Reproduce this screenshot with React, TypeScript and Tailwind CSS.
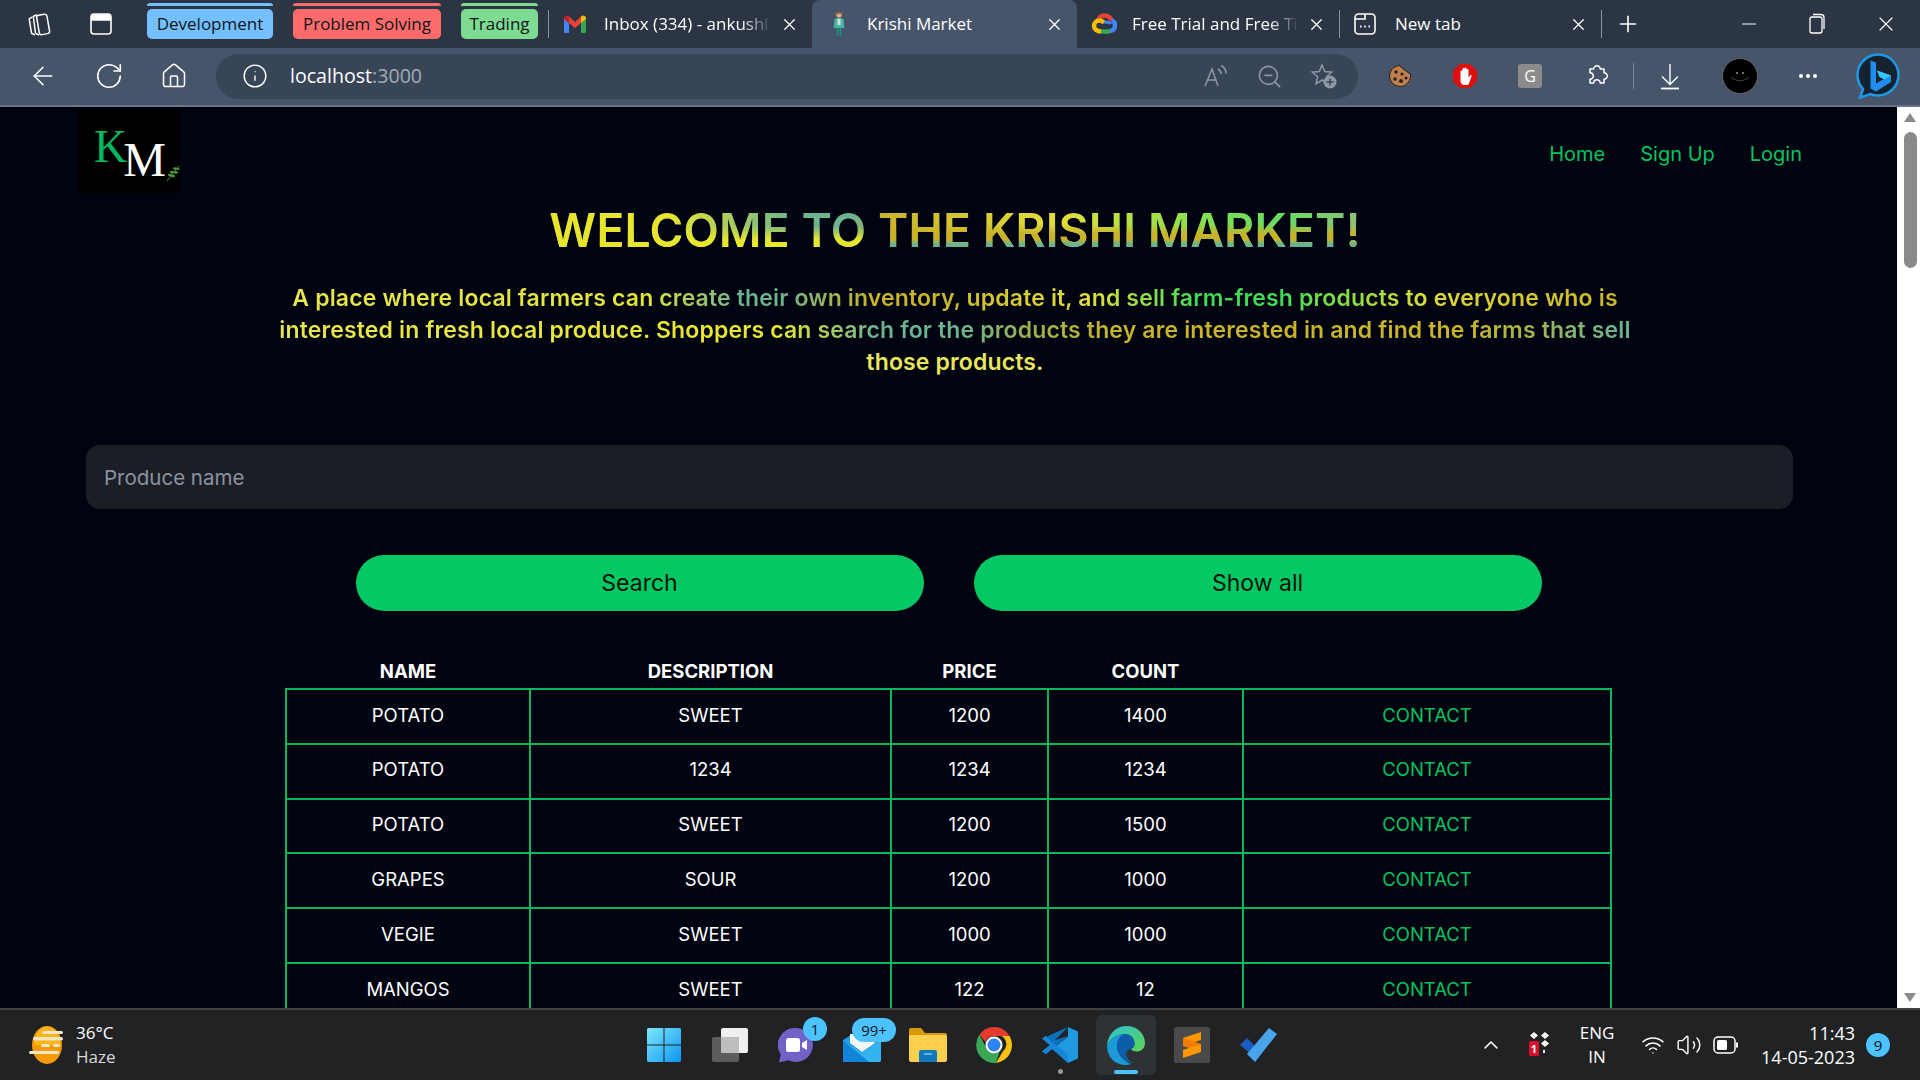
import {
  ArrowLeft,
  ChevronUp,
  Home,
  Info,
  Minus,
  MoreHorizontal,
  Plus,
  RotateCw,
  Volume2,
  Wifi,
  X,
  ZoomOut,
} from "lucide-react"
import type { ReactNode } from "react"

const ROWS = [
  ["POTATO", "SWEET", "1200", "1400"],
  ["POTATO", "1234", "1234", "1234"],
  ["POTATO", "SWEET", "1200", "1500"],
  ["GRAPES", "SOUR", "1200", "1000"],
  ["VEGIE", "SWEET", "1000", "1000"],
  ["MANGOS", "SWEET", "122", "12"],
]

function CollectionsIcon() {
  return (
    <svg width="30" height="30" viewBox="0 0 26 26" fill="none" stroke="#fff" strokeWidth="1.3">
      <rect x="12" y="5" width="9" height="17" rx="2" transform="rotate(-10 16 13)" />
      <path d="M11 5 8 6.5l2 14.5 3 1.5" />
      <path d="M7 7 4.5 8.5l2 12.5 3 1.5" />
    </svg>
  )
}

function VerticalTabsIcon() {
  return (
    <svg width="24" height="24" viewBox="0 0 24 24" fill="none" stroke="#fff" strokeWidth="1.6">
      <rect x="2" y="2" width="20" height="20" rx="3" />
      <path d="M3 3h18v5H3z" fill="#fff" />
    </svg>
  )
}

function GmailIcon() {
  return (
    <svg width="24" height="20" viewBox="0 0 24 20">
      <path d="M1 4v14a1 1 0 0 0 1 1h4V9z" fill="#4285f4" />
      <path d="M23 4v14a1 1 0 0 1-1 1h-4V9z" fill="#34a853" />
      <path d="M18 2.5 12 8 6 2.5V9l6 5 6-5z" fill="#ea4335" />
      <path d="M1 4c0-2.4 3-3.5 5-1.5V9L1 5z" fill="#c5221f" />
      <path d="M23 4c0-2.4-3-3.5-5-1.5V9l5-4z" fill="#fbbc04" />
    </svg>
  )
}

function FarmerIcon() {
  return (
    <svg width="26" height="26" viewBox="-6 0 26 26">
      <circle cx="7" cy="4" r="2.6" fill="#e4a77f" />
      <path d="M3 1.8h8v1.2H3z" fill="#a8612e" />
      <path d="M2.5 8 7 6.6 11.5 8l.8 9H1.7z" fill="#3fb8a6" />
      <path d="M5.5 8h3v6h-3z" fill="#f2d9c4" />
      <path d="M4.6 17h1.8v8H4.6zM7.6 17h1.8v8H7.6z" fill="#1f8f85" />
    </svg>
  )
}

function CloudIcon() {
  return (
    <svg width="26" height="22" viewBox="0 0 26 22" fill="none" strokeWidth="4.5">
      <path d="M7 8c1-3.500 3.500-5.500 6.500-5.500 3.500 0 6 2 7 5" stroke="#ea4335" />
      <path d="M20.500 7.500c3 1 4 3.500 3.500 6-.5 2.500-2.500 4.500-5.500 4.500" stroke="#4285f4" />
      <path d="M19 18.500H10" stroke="#34a853" />
      <path d="M10 18.500c-4 0-7-2.500-7-5.500 0-3 2.500-5.500 5.500-5.500 2 0 3.500 1 4.500 2.500" stroke="#fbbc04" />
      <path d="M13.500 10c2-1.500 5-1 6 1" stroke="#4285f4" strokeWidth="3" />
    </svg>
  )
}

function NewTabIcon() {
  return (
    <svg width="22" height="24" viewBox="0 0 22 24" fill="none" stroke="#fff" strokeWidth="1.6">
      <rect x="1" y="2" width="20" height="20" rx="3.500" />
      <path d="M1 7h10V2" />
      <path d="M6 14.500h1.500M10.250 14.500h1.500M14.500 14.500H16" strokeWidth="2" />
    </svg>
  )
}

function ReadAloudIcon() {
  return (
    <svg width="26" height="26" viewBox="0 0 26 26" fill="none" stroke="#8f98a5" strokeWidth="1.5">
      <path d="M2 23 9 6l6 17M4.500 17h9" />
      <path d="M15 6c2 1 3 3 3.200 5M18 2.500c3 1.500 5 4.500 5.200 8" />
    </svg>
  )
}

function FavoriteAddIcon() {
  return (
    <svg width="28" height="28" viewBox="0 0 28 28" fill="none">
      <path
        d="m12 3 2.800 6.600 7 .6-5.300 4.600 1.600 7L12 18l-6 3.800 1.600-7L2.300 10.200l7-.6z"
        stroke="#8f98a5"
        strokeWidth="1.5"
      />
      <circle cx="20" cy="20" r="6.500" fill="#8f98a5" />
      <path d="M20 16.500v7M16.500 20h7" stroke="#374557" strokeWidth="1.500" />
    </svg>
  )
}

function CookieIcon() {
  return (
    <svg width="24" height="24" viewBox="0 0 24 24">
      <path
        d="M12 1.500c.5 2 2 2.500 3 2.500.5 2 2 3 4 3 .2 1.500 1.500 2.500 3.500 2.500C23.500 16 19 22.500 12 22.500A10.500 10.500 0 0 1 12 1.500z"
        fill="#c07f4e"
        stroke="#2c2018"
        strokeWidth="1"
      />
      <circle cx="8" cy="8" r="1.800" fill="#2c2018" />
      <circle cx="14" cy="10" r="1.600" fill="#2c2018" />
      <circle cx="7" cy="15" r="1.800" fill="#2c2018" />
      <circle cx="13" cy="17" r="2" fill="#2c2018" />
      <circle cx="18" cy="14" r="1.500" fill="#2c2018" />
    </svg>
  )
}

function AdblockIcon() {
  return (
    <svg width="24" height="26" viewBox="0 0 24 26">
      <path d="M7 1h10l7 7v10l-7 7H7l-7-7V8z" fill="#e00f0f" />
      <path
        d="M7.500 15V8.500a1 1 0 0 1 2 0V13V6a1 1 0 0 1 2 0v7V5.500a1 1 0 0 1 2 0V13V7a1 1 0 0 1 2 0v8l1.500-2.500c.7-1 2-.3 1.500.8L16 20.500c-.7 1-1.500 1.500-3 1.500h-1.500c-2.500 0-4-1.800-4-4z"
        fill="#fff"
      />
    </svg>
  )
}

function PuzzleIcon() {
  return (
    <svg width="28" height="28" viewBox="0 0 24 24" fill="none" stroke="#fff" strokeWidth="1.300" strokeLinejoin="round">
      <path d="M6 6h3.200a2.800 2.800 0 1 1 5.600 0H18v3.200a2.800 2.800 0 1 1 0 5.600V18h-3.200a2.800 2.800 0 1 0-5.600 0H6v-3.200a2.800 2.800 0 1 0 0-5.600z" />
    </svg>
  )
}

function DownloadIcon() {
  return (
    <svg width="28" height="30" viewBox="0 0 28 30" fill="none" stroke="#fff" strokeWidth="1.400">
      <path d="M14 3v20M6 15.500l8 8 8-8" />
      <path d="M5 27.500h18" strokeWidth="1.800" />
    </svg>
  )
}

function BatteryIcon() {
  return (
    <svg width="26" height="20" viewBox="0 0 26 20" fill="none">
      <rect x="1" y="2" width="21" height="16" rx="4" stroke="#fff" strokeWidth="1.500" />
      <rect x="4" y="5" width="10" height="10" rx="1.500" fill="#fff" />
      <path d="M24 7.500v5" stroke="#fff" strokeWidth="2" />
    </svg>
  )
}

function BingIcon() {
  return (
    <svg width="44" height="46" viewBox="0 0 44 46">
      <path
        d="M22 1.500a20.500 20.500 0 1 1-7.500 39.600L4 44.500l3-8.500A20.500 20.500 0 0 1 22 1.500z"
        fill="#16232f"
        stroke="#1e97e8"
        strokeWidth="2.500"
      />
      <path d="M14.500 7.500 20 9.500v21l8-4.500-4.500-2-2.500-6.500 14 5v6.500L20 38.500l-5.500-3z" fill="#1f8cf0" />
      <path d="M20 30.500 28 26l-4.500-2-2.500-6.500 14 5z" fill="#35c7f3" />
    </svg>
  )
}

function WeatherIcon() {
  return (
    <svg width="40" height="40" viewBox="0 0 40 40">
      <ellipse cx="20" cy="20" rx="15" ry="19" fill="#f59b0b" />
      <path d="M7 20a13 18 0 0 1 26 0z" fill="#fbb516" />
      <g fill="#f2e6c4">
        <rect x="15" y="6" width="21" height="3" rx="1.500" />
        <rect x="6" y="12" width="30" height="3.500" rx="1.700" />
        <rect x="14" y="19" width="9" height="3" rx="1.500" />
        <rect x="26" y="19" width="7" height="3" rx="1.500" />
        <rect x="2" y="26" width="30" height="3" rx="1.500" />
      </g>
    </svg>
  )
}

function WindowsIcon() {
  return (
    <svg width="36" height="36" viewBox="0 0 36 36">
      <defs>
        <linearGradient id="win" x1="0" y1="0" x2="1" y2="1">
          <stop offset="0" stopColor="#7ee8fb" />
          <stop offset="1" stopColor="#0c95f2" />
        </linearGradient>
      </defs>
      <path
        d="M1 2.500A1.500 1.500 0 0 1 2.500 1h15v16.500H1zM18.500 1h15A1.500 1.500 0 0 1 35 2.500v15H18.500zM1 18.500h16.500V35h-15A1.500 1.500 0 0 1 1 33.500zM18.500 18.500H35v15a1.500 1.500 0 0 1-1.500 1.500h-15z"
        fill="url(#win)"
      />
    </svg>
  )
}

function TaskViewIcon() {
  return (
    <svg width="38" height="36" viewBox="0 0 38 36">
      <rect x="1" y="10" width="27" height="25" rx="2" fill="#5c5c5c" />
      <rect x="10" y="1" width="27" height="25" rx="2" fill="#f0f0f0" />
      <rect x="10" y="10" width="18" height="16" fill="#bdbdbd" />
    </svg>
  )
}

function ChatIcon() {
  return (
    <svg width="36" height="36" viewBox="0 0 36 36">
      <path
        d="M18 1a17 17 0 1 1-7.500 32.300L1 35.500l1.800-8A17 17 0 0 1 18 1z"
        fill="#7261c6"
      />
      <rect x="8" y="11" width="14" height="14" rx="2.500" fill="#fff" />
      <path d="m24 16 5-3v10l-5-3z" fill="#fff" />
    </svg>
  )
}

function MailIcon() {
  return (
    <svg width="38" height="34" viewBox="0 0 38 34">
      <path d="M0 12 19 0l19 12v20a2 2 0 0 1-2 2H2a2 2 0 0 1-2-2z" fill="#1e9ce8" />
      <path d="M7 6h20l5 9-13 9-12-9z" fill="#f3f5f7" />
      <path d="M0 12 19 25l19-13v20a2 2 0 0 1-2 2H2a2 2 0 0 1-2-2z" fill="#34b4ee" />
      <path d="M0 12 26 34H2a2 2 0 0 1-2-2z" fill="#1183d8" />
    </svg>
  )
}

function FolderIcon() {
  return (
    <svg width="38" height="34" viewBox="0 0 38 34">
      <path d="M0 2a2 2 0 0 1 2-2h10l4 5h20a2 2 0 0 1 2 2v6H0z" fill="#d79a0a" />
      <path d="M0 7h36a2 2 0 0 1 2 2v23a2 2 0 0 1-2 2H2a2 2 0 0 1-2-2z" fill="#fdcf4f" />
      <path d="M10 24a2 2 0 0 1 2-2h14a2 2 0 0 1 2 2v10H10z" fill="#1278bd" />
      <path d="M15 26h8" stroke="#7cc6ee" strokeWidth="1.500" />
    </svg>
  )
}

function ChromeIcon() {
  return (
    <svg width="38" height="38" viewBox="0 0 38 38">
      <path d="M19 1a18 18 0 0 1 15.600 9H19a9 9 0 0 0-8.500 6L4.300 8.800A18 18 0 0 1 19 1z" fill="#e33b2e" />
      <path d="M34.600 10A18 18 0 0 1 21 36.900l7-12a9 9 0 0 0-1.500-14.900z" fill="#fbc116" />
      <path d="M21 36.900A18 18 0 0 1 4.300 8.800l7.500 14a9 9 0 0 0 13 2.800z" fill="#3aa757" />
      <circle cx="19" cy="19" r="8.500" fill="#fff" />
      <circle cx="19" cy="19" r="6.500" fill="#2f82f2" />
    </svg>
  )
}

function VscodeIcon() {
  return (
    <svg width="38" height="38" viewBox="0 0 38 38">
      <path d="M27 1 37 5.500v27L27 37 12 22.500l15-12z" fill="#1f9ae0" />
      <path d="M27 1v36L27 27V10z" fill="#1f9ae0" />
      <path d="M27 10 11 23l-6 5-4-2.500L9 19 1 12.500 5 10l6 5z" fill="#0a72bd" />
      <path d="M27 1 12 16l-6-5 3-2z" fill="#0a72bd" />
      <path d="M27 28 11 16l-6-6-4 2.500L9 19l-8 6.500L5 28l6-5 16 14z" fill="#1687d6" />
    </svg>
  )
}

function EdgeIcon() {
  return (
    <svg width="40" height="40" viewBox="0 0 40 40">
      <defs>
        <linearGradient id="edge" x1="0" y1="0" x2="1" y2="1">
          <stop offset="0" stopColor="#2cc3d5" />
          <stop offset="1" stopColor="#5ed44e" />
        </linearGradient>
      </defs>
      <path
        d="M20 1c11 0 19 7.500 19 17 0 6-4.500 8.500-8.500 8.500-2.500 0-5-1-5.500-2.500 2.500-1 3.500-3 3.500-5C28.500 13 24.500 9 18.500 9 10 9 3 15 1 21 1.500 10 9.500 1 20 1z"
        fill="url(#edge)"
      />
      <path
        d="M1 21c2-6 9-12 17.500-12-5 2-7.500 7-7.500 12 0 7.500 5.500 14 14 18-1.500.5-3.500 1-5 1C9 40 1 32 1 21z"
        fill="#1a9ad6"
      />
      <path
        d="M11 21c0-5 2.500-10 7.500-12 6 0 10 4 10 10 0 2-1 4-3.500 5-3 0-6.500 3.500-4 8 1.500 3 4 5 6.500 6C17 37 11 29 11 21z"
        fill="#0d5ea8"
      />
    </svg>
  )
}

function SublimeIcon() {
  return (
    <svg width="36" height="36" viewBox="0 0 36 36">
      <rect width="36" height="36" rx="2" fill="#4a4a4a" />
      <path d="M27 5v8L9 19v-8z" fill="#ff9800" />
      <path d="M9 11l18 6v8L9 19z" fill="#ef7c00" />
      <path d="M27 17v8L9 31v-8z" fill="#ff9800" />
    </svg>
  )
}

function TodoIcon() {
  return (
    <svg width="38" height="34" viewBox="0 0 38 34">
      <path d="M1 17 8 10l7 7-3 9z" fill="#1b5cc4" />
      <path d="M30 0l8 6-22 28-8-8z" fill="#4aa4ec" />
    </svg>
  )
}

function TrayDropIcon() {
  return (
    <svg width="26" height="28" viewBox="0 0 26 28">
      <path d="m7 1 4 3.500L7 8 3 4.500zM18 1l4 3.500L18 8l-4-3.500z" fill="#fff" />
      <path d="m18 9 4 3.500-4 3.500-4-3.500z" fill="#fff" />
      <rect x="2" y="10" width="10" height="15" rx="1.500" fill="#d80f2a" />
      <text x="7" y="22" fontSize="11" fill="#fff" textAnchor="middle" fontFamily="'Open Sans',sans-serif" fontWeight="700">
        1
      </text>
      <rect x="16" y="19" width="2" height="3" fill="#fff" />
    </svg>
  )
}

function Sprig() {
  return (
    <svg width="14" height="18" viewBox="0 0 14 18" fill="#4f9a3a">
      <path d="M1 17 13 2" stroke="#4f9a3a" strokeWidth="1" />
      <ellipse cx="4" cy="11" rx="2" ry="1.200" />
      <ellipse cx="7" cy="12" rx="2" ry="1.200" />
      <ellipse cx="6" cy="8" rx="2" ry="1.200" />
      <ellipse cx="10" cy="8.500" rx="2" ry="1.200" />
      <ellipse cx="9" cy="4.500" rx="2" ry="1.200" />
      <ellipse cx="12" cy="5" rx="1.600" ry="1" />
    </svg>
  )
}

function GroupPill({ label, bar, width }: { label: string; bar: string; width: string }) {
  return (
    <div className={`flex flex-col gap-[3px] ${width}`}>
      <div className={`h-[3px] rounded-t-sm ${bar}`} />
      <div className={`flex h-[30px] items-center justify-center rounded-[5px] text-[17px] text-[#10151c] ${bar}`}>
        {label}
      </div>
    </div>
  )
}

function Tab({
  icon,
  title,
  width,
  active,
  fade,
}: {
  icon: ReactNode
  title: string
  width: string
  active?: boolean
  fade?: boolean
}) {
  return (
    <div
      className={`flex h-12 shrink-0 items-center pl-[14px] pr-[13px] ${width} ${active ? "rounded-t-lg bg-[#465569]" : ""}`}
    >
      <div className="flex w-[41px] shrink-0 justify-start">{icon}</div>
      <div
        className={`min-w-0 flex-1 overflow-hidden whitespace-nowrap text-[17px] text-white ${
          fade ? "[mask-image:linear-gradient(90deg,#000_82%,transparent)]" : ""
        }`}
      >
        {title}
      </div>
      <X className="ml-2 size-[19px] shrink-0 text-white" strokeWidth={1.5} />
    </div>
  )
}

function TabSep() {
  return <div className="h-7 w-px shrink-0 bg-[#8a94a0]" />
}

function TabStrip() {
  return (
    <div className="flex h-12 shrink-0 bg-[#2b3543]">
      <div className="flex w-[147px] shrink-0 items-center gap-[35px] pl-[24px]">
        <CollectionsIcon />
        <VerticalTabsIcon />
      </div>
      <div className="flex w-[401px] shrink-0 gap-5 pt-[3px]">
        <GroupPill label="Development" bar="bg-[#74c0ff]" width="w-[126px]" />
        <GroupPill label="Problem Solving" bar="bg-[#ff6b6b]" width="w-[148px]" />
        <GroupPill label="Trading" bar="bg-[#7edb92]" width="w-[77px]" />
      </div>
      <div className="flex items-center">
        <TabSep />
      </div>
      <Tab icon={<GmailIcon />} title="Inbox (334) - ankushl" width="w-[263px]" fade />
      <Tab icon={<FarmerIcon />} title="Krishi Market" width="w-[265px]" active />
      <Tab icon={<CloudIcon />} title="Free Trial and Free Ti" width="w-[262px]" fade />
      <div className="flex items-center">
        <TabSep />
      </div>
      <Tab icon={<NewTabIcon />} title="New tab" width="w-[261px]" />
      <div className="flex items-center">
        <TabSep />
      </div>
      <div className="flex w-[52px] items-center justify-center">
        <Plus className="size-[26px] text-white" strokeWidth={1.5} />
      </div>
      <div className="flex flex-1 items-center justify-end gap-[47px] pr-[22px]">
        <Minus className="size-[22px] text-white" strokeWidth={1.2} />
        <svg width="20" height="22" viewBox="0 0 20 22" fill="none" stroke="#fff" strokeWidth="1.300">
          <rect x="3" y="4" width="12" height="16" rx="2" />
          <path d="M6 1.500h8a3 3 0 0 1 3 3V16" />
        </svg>
        <X className="size-[24px] text-white" strokeWidth={1.2} />
      </div>
    </div>
  )
}

function Toolbar() {
  return (
    <div className="flex h-[59px] shrink-0 items-center border-b-2 border-b-[#6b7685] bg-[#465569] pb-[1px]">
      <div className="flex w-[216px] shrink-0 items-center gap-[36px] pl-[28px]">
        <ArrowLeft className="size-[30px] text-white" strokeWidth={1.3} />
        <RotateCw className="size-[30px] text-white" strokeWidth={1.3} />
        <Home className="size-[28px] text-white" strokeWidth={1.3} />
      </div>
      <div className="flex h-[45px] w-[1142px] shrink-0 items-center rounded-full bg-[#374557] pl-[26px] pr-[20px]">
        <Info className="size-[26px] text-white" strokeWidth={1.3} />
        <span className="ml-[22px] text-[19.6px] text-white">
          localhost<span className="text-[#a3abb6]">:3000</span>
        </span>
        <div className="ml-auto flex items-center gap-[27px]">
          <ReadAloudIcon />
          <ZoomOut className="size-[27px] text-[#8f98a5]" strokeWidth={1.4} />
          <FavoriteAddIcon />
        </div>
      </div>
      <div className="flex flex-1 items-center pl-[30px]">
        <div className="flex items-center gap-[41px]">
          <CookieIcon />
          <AdblockIcon />
          <div className="flex size-6 items-center justify-center rounded-[3px] bg-[#8b8b8b] text-[16px] text-white">G</div>
          <PuzzleIcon />
        </div>
        <div className="ml-[22px] h-[26px] w-px bg-[#7c8695]" />
        <div className="ml-[22px]">
          <DownloadIcon />
        </div>
        <div className="ml-[38px] flex size-9 items-center justify-center rounded-full border border-[#666] bg-black">
          <svg width="22" height="14" viewBox="0 0 22 14" fill="none">
            <circle cx="8" cy="4" r=".8" fill="#fff" />
            <circle cx="14" cy="4" r=".8" fill="#fff" />
            <path d="M2 8c5 5 13 5 18 0" stroke="#444" strokeWidth="1" />
          </svg>
        </div>
        <MoreHorizontal className="ml-[38px] size-[24px] text-white" strokeWidth={2} />
        <div className="ml-[36px]">
          <BingIcon />
        </div>
      </div>
    </div>
  )
}

function NavBar() {
  return (
    <div className="flex h-[87px] shrink-0 pt-[3px]">
      <div className="ml-[77px] flex h-[83px] w-[103px] shrink-0 bg-black pl-[17px] pt-[14px]">
        <span className="font-['Liberation_Serif',serif] text-[46px] leading-[46px] text-[#04b760]">K</span>
        <span className="ml-[-4px] mt-[13px] font-['Liberation_Serif',serif] text-[48px] leading-[46px] text-white">M</span>
        <div className="mt-[40px]">
          <Sprig />
        </div>
      </div>
      <nav className="ml-auto mr-[95px] flex items-center gap-[35px] pt-[3px] text-[20px] text-[#04c460]">
        <a>Home</a>
        <a>Sign Up</a>
        <a>Login</a>
      </nav>
    </div>
  )
}

function Hero() {
  return (
    <div className="flex shrink-0 flex-col items-center pl-[13px]">
      <h1 className="mt-[6px] flex h-[60px] items-center whitespace-nowrap text-[46px] font-semibold leading-[60px] tracking-[0.2px]">
        <span className="bg-[linear-gradient(180deg,transparent_44%,#e8e52e_66%),linear-gradient(90deg,#e8e52e_0%,#e8e52e_36%,#6cb390_74%,#6cb390_92%,#a5b048_100%)] bg-clip-text text-transparent">
          WELCOME TO&nbsp;
        </span>
        <span className="bg-[linear-gradient(180deg,transparent_40%,#c9b22a_57%,#c9b22a_66%,#6cb390_73%),linear-gradient(90deg,#c9b22a_0%,#e2de3c_38%,#76e055_72%,#6cd86a_86%,#8fbf78_100%)] bg-clip-text text-transparent">
          THE KRISHI MARKET!
        </span>
      </h1>
      <div className="mt-[22px] text-center text-[23px] font-semibold leading-8 tracking-[0.15px]">
        <p className="whitespace-nowrap bg-[linear-gradient(90deg,#e7e64f_0%,#e4e636_27%,#6cb390_34%,#6cb390_37%,#c9b42a_44%,#c9b42a_48%,#e3de3c_60%,#3fdd55_68%,#3fdd55_74%,#dfdc38_85%,#c9b32a_100%)] bg-clip-text text-transparent">
          A place where local farmers can create their own inventory, update it, and sell farm-fresh products to everyone who is
        </p>
        <p className="whitespace-nowrap bg-[linear-gradient(90deg,#e7e64f_0%,#e8e62e_37%,#6cb390_44%,#6cb390_50%,#9fae4a_56%,#c9b42a_62%,#c9b42a_88%,#6cb390_99%)] bg-clip-text text-transparent">
          interested in fresh local produce. Shoppers can search for the products they are interested in and find the farms that sell
        </p>
        <p className="whitespace-nowrap text-[#e8e65a]">those products.</p>
      </div>
    </div>
  )
}

function SearchArea() {
  return (
    <div className="flex shrink-0 flex-col">
      <input
        readOnly
        placeholder="Produce name"
        className="ml-[86px] mt-[67px] h-16 w-[1707px] rounded-[14px] bg-[#1c1e26] px-[18px] text-[20.5px] text-white outline-none placeholder:text-[#8b93a1]"
      />
      <div className="mt-[46px] flex justify-center gap-[50px]">
        <button className="h-14 w-[568px] rounded-full bg-[#04c864] text-[23px] text-[#04140c]">Search</button>
        <button className="h-14 w-[568px] rounded-full bg-[#04c864] text-[23px] text-[#04140c]">Show all</button>
      </div>
    </div>
  )
}

function ProduceTable() {
  return (
    <table className="mx-auto mt-[45px] w-[1325px] shrink-0 table-fixed border-collapse text-[18.5px] text-white">
      <colgroup>
        <col className="w-[244px]" />
        <col className="w-[361px]" />
        <col className="w-[157px]" />
        <col className="w-[195px]" />
        <col className="w-[368px]" />
      </colgroup>
      <thead>
        <tr className="h-[33px] font-bold">
          <th>NAME</th>
          <th>DESCRIPTION</th>
          <th>PRICE</th>
          <th>COUNT</th>
          <th />
        </tr>
      </thead>
      <tbody>
        {ROWS.map((row, i) => (
          <tr key={i} className="h-[54.8px]">
            {row.map((cell, j) => (
              <td key={j} className="border-2 border-[#05b85c] pb-[2px] text-center">
                {cell}
              </td>
            ))}
            <td className="border-2 border-[#05b85c] pb-[2px] text-center text-[#04c460]">CONTACT</td>
          </tr>
        ))}
      </tbody>
    </table>
  )
}

function Scrollbar() {
  return (
    <div className="flex w-[23px] shrink-0 flex-col items-center bg-white pl-[3px] pt-[6px]">
      <div className="h-0 w-0 border-x-[6px] border-b-[9px] border-x-transparent border-b-[#8a8a8a]" />
      <div className="mt-[10px] h-[136px] w-[13px] rounded-full bg-[#8a8a8a]" />
      <div className="mb-[6px] mt-auto h-0 w-0 border-x-[6px] border-t-[9px] border-x-transparent border-t-[#8a8a8a]" />
    </div>
  )
}

function AppSlot({ children, active, running }: { children: ReactNode; active?: boolean; running?: boolean }) {
  return (
    <div className="relative flex h-[60px] w-[66px] shrink-0 items-center justify-center">
      {active && <div className="absolute inset-y-0 left-[3px] w-[60px] rounded-md bg-[#2f3235]" />}
      <div className="relative">{children}</div>
      {active && <div className="absolute bottom-[1px] h-1 w-6 rounded-full bg-[#4cc2ff]" />}
      {running && <div className="absolute bottom-[1px] size-[5px] rounded-full bg-[#9a9a9a]" />}
    </div>
  )
}

function Badge({ children, wide }: { children: ReactNode; wide?: boolean }) {
  return (
    <div
      className={`absolute -top-[10px] flex h-6 items-center justify-center rounded-full bg-[#4cc2ff] text-[15px] text-[#10151c] ${
        wide ? "-right-[15px] w-11" : "-right-[13px] w-6"
      }`}
    >
      {children}
    </div>
  )
}

function Taskbar() {
  return (
    <div className="flex h-[72px] shrink-0 items-center border-t-2 border-t-[#3f4143] bg-[#202224] text-white">
      <div className="flex w-[631px] shrink-0 items-center pl-[27px]">
        <WeatherIcon />
        <div className="ml-[9px] flex flex-col text-[17px] leading-[24px]">
          <span>36°C</span>
          <span className="text-[#d8d8d8]">Haze</span>
        </div>
      </div>
      <AppSlot>
        <WindowsIcon />
      </AppSlot>
      <AppSlot>
        <TaskViewIcon />
      </AppSlot>
      <AppSlot>
        <ChatIcon />
        <Badge>1</Badge>
      </AppSlot>
      <AppSlot>
        <MailIcon />
        <Badge wide>99+</Badge>
      </AppSlot>
      <AppSlot>
        <FolderIcon />
      </AppSlot>
      <AppSlot>
        <ChromeIcon />
      </AppSlot>
      <AppSlot running>
        <VscodeIcon />
      </AppSlot>
      <AppSlot active>
        <EdgeIcon />
      </AppSlot>
      <AppSlot>
        <SublimeIcon />
      </AppSlot>
      <AppSlot>
        <TodoIcon />
      </AppSlot>
      <div className="ml-[188px] flex flex-1 items-center">
        <ChevronUp className="size-[24px]" strokeWidth={1.6} />
        <div className="ml-[24px]">
          <TrayDropIcon />
        </div>
        <div className="ml-[21px] flex w-[46px] flex-col items-center text-[17px] leading-[24px]">
          <span>ENG</span>
          <span>IN</span>
        </div>
        <Wifi className="ml-[21px] size-[24px]" strokeWidth={1.5} />
        <Volume2 className="ml-[11px] size-[26px]" strokeWidth={1.3} />
        <div className="ml-[11px]">
          <BatteryIcon />
        </div>
        <div className="ml-auto flex flex-col items-end text-[18px] leading-[24px]">
          <span>11:43</span>
          <span>14-05-2023</span>
        </div>
        <div className="ml-[11px] mr-[30px] flex size-6 items-center justify-center rounded-full bg-[#4cc2ff] text-[15px] text-[#10151c]">
          9
        </div>
      </div>
    </div>
  )
}

export default function App() {
  return (
    <div className="flex h-screen flex-col overflow-hidden font-['Open_Sans',sans-serif]">
      <TabStrip />
      <Toolbar />
      <div className="flex min-h-0 flex-1 bg-[#000310]">
        <main className="flex min-w-0 flex-1 flex-col overflow-hidden font-['Inter',sans-serif]">
          <NavBar />
          <Hero />
          <SearchArea />
          <ProduceTable />
        </main>
        <Scrollbar />
      </div>
      <Taskbar />
    </div>
  )
}
